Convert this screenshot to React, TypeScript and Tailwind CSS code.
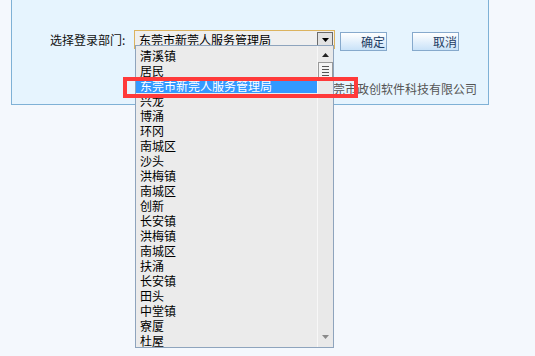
import React from "react";

const items = [
  "清溪镇",
  "居民",
  "东莞市新莞人服务管理局",
  "兴龙",
  "博涌",
  "环冈",
  "南城区",
  "沙头",
  "洪梅镇",
  "南城区",
  "创新",
  "长安镇",
  "洪梅镇",
  "南城区",
  "扶涌",
  "长安镇",
  "田头",
  "中堂镇",
  "寮厦",
  "杜屋",
];

const font = { fontFamily: '"Noto Sans CJK SC", "Noto Sans", sans-serif' };

function Btn({ label }: { label: string }) {
  return (
    <button className="h-[19px] w-[47px] border border-[#86a9cc] bg-gradient-to-b from-[#ffffff] to-[#c9e2f8] pl-[20px] text-left text-[12px] leading-[17px] text-[#1d3b63]">
      {label}
    </button>
  );
}

export default function App() {
  return (
    <div className="relative h-[356px] w-[535px] overflow-hidden bg-[#f4f8fd]" style={font}>
      {/* main panel */}
      <div className="ml-[11px] h-[105px] w-[478px] border-x border-b border-[#7fb1d6] bg-[#e6f4fe]">
        <div className="flex items-center pl-[38px] pt-[27px]">
          <span className="w-[84px] text-[12px] leading-[19px] text-[#111]">选择登录部门:</span>
          <div className="flex h-[19px] w-[201px] items-center border border-[#dcb35f] bg-[#efefef] pl-[4px] pr-[1px]">
            <span className="flex-1 text-[12px] leading-[17px] text-black">东莞市新莞人服务管理局</span>
            <span className="flex h-[16px] w-[16px] items-center justify-center border border-[#6b6b6b] bg-[#e2e2e2]">
              <svg width="7" height="4" viewBox="0 0 7 4">
                <path d="M0 0h7L3.5 4z" fill="#000" />
              </svg>
            </span>
          </div>
          <div className="ml-[5px] mt-[1px]">
            <Btn label="确定" />
          </div>
          <div className="ml-[25px] mt-[1px]">
            <Btn label="取消" />
          </div>
        </div>
        <div className="mt-[30px] pr-[11px] text-right text-[12px] leading-[14px] text-[#555]">
          东莞市政创软件科技有限公司
        </div>
      </div>

      {/* dropdown list */}
      <div className="absolute left-[135px] top-[45px] flex h-[303px] w-[199px] border border-[#8ea4bd] bg-[#ebebeb]">
        <div className="flex-1 pt-[2px]">
          {items.map((it, i) => (
            <div
              key={i}
              className={
                i === 2
                  ? "h-[15px] bg-[#3399ff] pl-[4px] text-[12px] leading-[15px] text-white"
                  : "h-[15px] pl-[4px] text-[12px] leading-[15px] text-black"
              }
            >
              {it}
            </div>
          ))}
        </div>
        <div className="flex w-[16px] flex-col items-center border-l border-[#f7f7f7] bg-[#e9e9e9]">
          <div className="flex h-[16px] w-full items-center justify-center pt-[2px]">
            <svg width="7" height="4" viewBox="0 0 7 4">
              <path d="M3.5 0L7 4H0z" fill="#222" />
            </svg>
          </div>
          <div className="flex h-[17px] w-[15px] flex-col items-center justify-center gap-[2px] border border-[#9a9a9a] bg-[#f4f4f4]">
            <span className="h-px w-[7px] bg-[#555]" />
            <span className="h-px w-[7px] bg-[#555]" />
            <span className="h-px w-[7px] bg-[#555]" />
            <span className="h-px w-[7px] bg-[#555]" />
          </div>
          <div className="flex-1" />
          <div className="flex h-[16px] w-full items-center justify-center pb-[4px]">
            <svg width="7" height="4" viewBox="0 0 7 4">
              <path d="M0 0h7L3.5 4z" fill="#8a8a8a" />
            </svg>
          </div>
        </div>
      </div>

      {/* red annotation */}
      <div className="absolute left-[123px] top-[77px] h-[21px] w-[235px] border-4 border-[#ff3a3a]" />
    </div>
  );
}
